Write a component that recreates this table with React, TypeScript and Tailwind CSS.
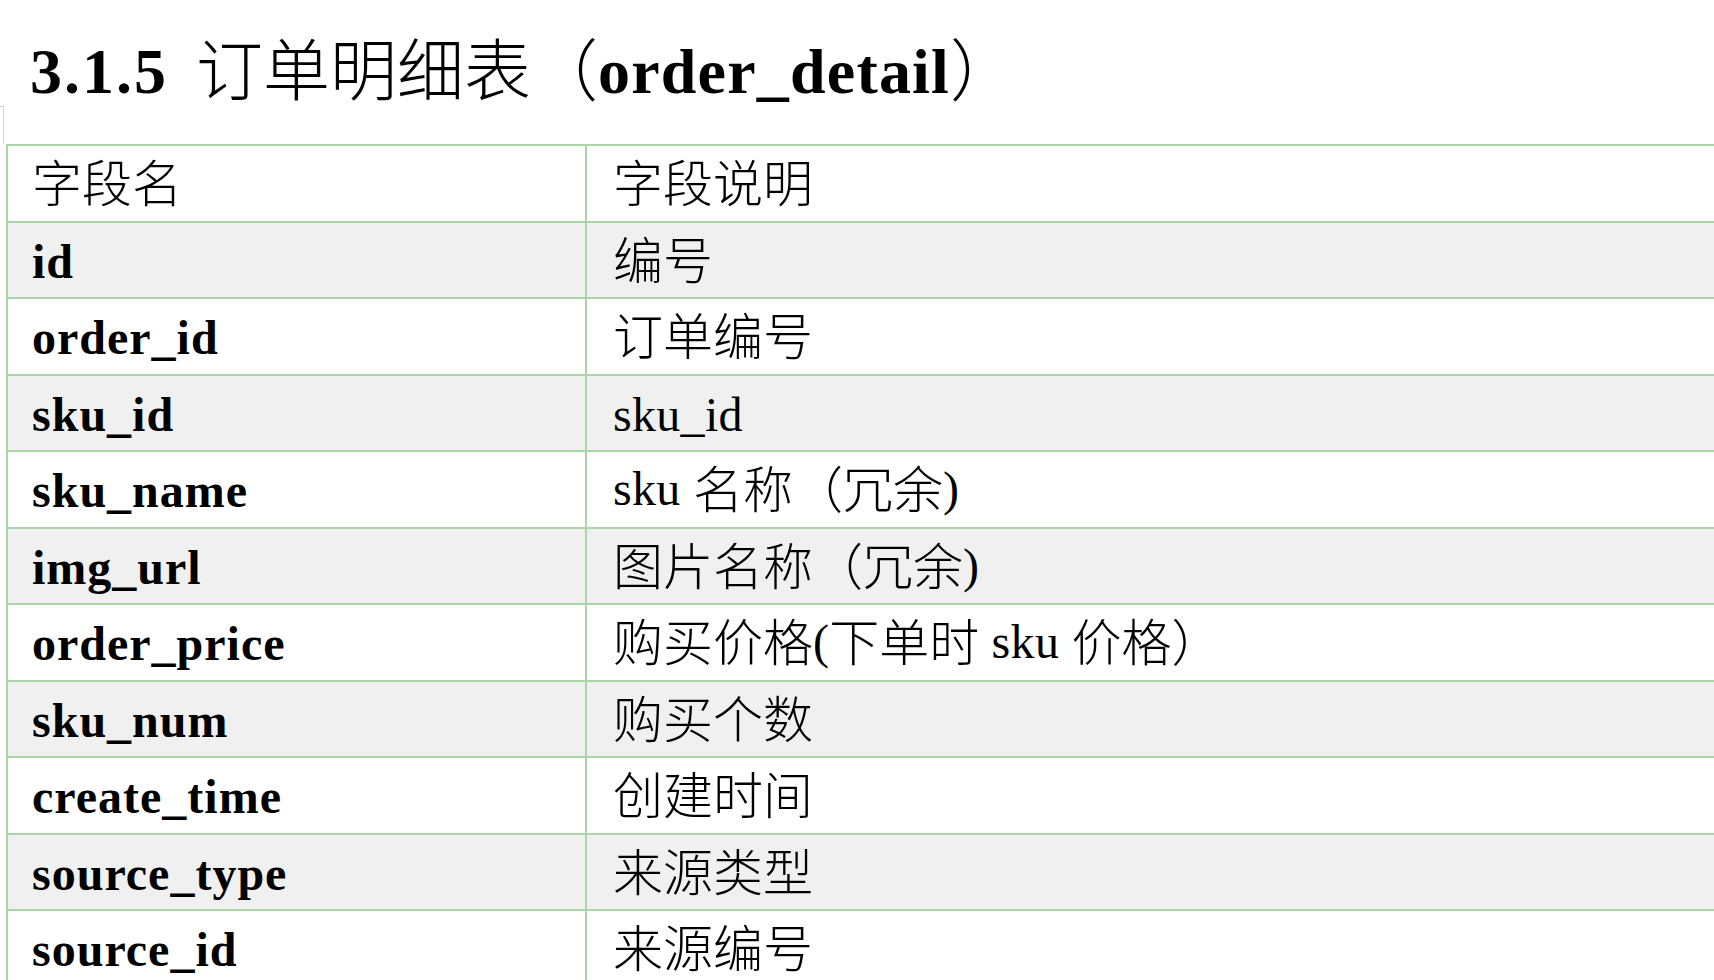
import clsx from 'clsx';

type Row = { name: string; desc: string };

const rows: Row[] = [
  { name: 'id', desc: '编号' },
  { name: 'order_id', desc: '订单编号' },
  { name: 'sku_id', desc: 'sku_id' },
  { name: 'sku_name', desc: 'sku 名称（冗余)' },
  { name: 'img_url', desc: '图片名称（冗余)' },
  { name: 'order_price', desc: '购买价格(下单时 sku 价格）' },
  { name: 'sku_num', desc: '购买个数' },
  { name: 'create_time', desc: '创建时间' },
  { name: 'source_type', desc: '来源类型' },
  { name: 'source_id', desc: '来源编号' },
];

const CJK_SPLIT = /([\u3000-\u303f\u4e00-\u9fff\uff00-\uffef]+)/;
const CJK_RUN = /^[\u3000-\u303f\u4e00-\u9fff\uff00-\uffef]+$/;

// CJK glyphs come from the fallback font: render them a touch larger and lower, like SimSun
function Mixed({ text }: { text: string }) {
  return (
    <>
      {text.split(CJK_SPLIT).map((part, i) =>
        CJK_RUN.test(part) ? (
          <span key={i} className="text-[50px] font-light tracking-normal align-[-3px]">
            {part}
          </span>
        ) : (
          part
        )
      )}
    </>
  );
}

function Cell({ text, bold, first }: { text: string; bold?: boolean; first?: boolean }) {
  const cjk = CJK_SPLIT.test(text);
  return (
    <div
      className={clsx(
        'whitespace-nowrap leading-none',
        first ? 'w-[579px] shrink-0 border-r-2 border-[#a9d5a9] pl-[24px]' : 'flex-1 pl-[26px]',
        cjk ? 'pt-[13px]' : 'pt-[15px]',
        bold ? 'font-bold tracking-[1px]' : 'font-normal tracking-[0.3px]'
      )}
    >
      <Mixed text={text} />
    </div>
  );
}

function TableRow({ name, desc, header, shaded }: Row & { header?: boolean; shaded?: boolean }) {
  return (
    <div
      className={clsx(
        'flex h-[76.5px] border-t-2 border-[#a9d5a9]',
        shaded ? 'bg-[#f0f0f0]' : 'bg-white'
      )}
    >
      <Cell text={name} bold={!header} first />
      <Cell text={desc} />
    </div>
  );
}

export default function App() {
  return (
    <div className="relative h-[980px] w-[1714px] overflow-hidden bg-white text-black font-['Liberation_Serif','Noto_Sans_CJK_SC',serif]">
      {/* little frame edge peeking in on the left */}
      <div className="absolute left-0 top-[106px] h-[38px] w-[4px] border-t border-r border-[#d4d4d4]" />

      {/* Title */}
      <div className="h-[144px] pl-[30px] pt-[39px]">
        <h1 className="whitespace-nowrap text-[64px] leading-none font-bold">
          <span className="mr-[28px] tracking-[2px]">3.1.5</span>
          <span className="text-[67px] font-light align-[-2px]">订单明细表（</span>
          <span className="tracking-[1.2px]">order_detail</span>
          <span className="text-[67px] font-light align-[-2px]">）</span>
        </h1>
      </div>

      {/* Table */}
      <div className="ml-[6px] border-l-2 border-[#a9d5a9] text-[48px]">
        <TableRow name="字段名" desc="字段说明" header />
        {rows.map((r, i) => (
          <TableRow key={r.name} {...r} shaded={i % 2 === 0} />
        ))}
      </div>
    </div>
  );
}
